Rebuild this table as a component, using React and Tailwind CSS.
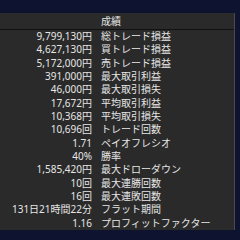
const rows = [
  ["9,799,130円", "総トレード損益"],
  ["4,627,130円", "買トレード損益"],
  ["5,172,000円", "売トレード損益"],
  ["391,000円", "最大取引利益"],
  ["46,000円", "最大取引損失"],
  ["17,672円", "平均取引利益"],
  ["10,368円", "平均取引損失"],
  ["10,696回", "トレード回数"],
  ["1.71", "ペイオフレシオ"],
  ["40%", "勝率"],
  ["1,585,420円", "最大ドローダウン"],
  ["10回", "最大連勝回数"],
  ["16回", "最大連敗回数"],
  ["131日21時間22分", "フラット期間"],
  ["1.16", "プロフィットファクター"],
];

export default function App() {
  return (
    <div
      className="w-[240px] h-[240px] bg-[#0e1430] pt-[13px] overflow-hidden"
      style={{ fontFamily: '"Noto Sans", "Noto Sans CJK JP", sans-serif' }}
    >
      <div className="w-[235px] h-[217px] bg-[#2a2a2a] border-r border-[#4a4a4a] text-[10px] text-[#e6e6e6] flex flex-col">
        <div className="h-[17px] shrink-0 border-b border-[#111] grid grid-cols-[101px_1fr] items-center leading-[13px]">
          <div />
          <div>成績</div>
        </div>
        <div className="flex-1 flex flex-col">
          {rows.map(([v, k]) => (
            <div key={k} className="flex-1 grid grid-cols-[92px_1fr] items-center leading-[13px]">
              <div className="text-right whitespace-nowrap">{v}</div>
              <div className="pl-[9px] whitespace-nowrap">{k}</div>
            </div>
          ))}
        </div>
      </div>
    </div>
  );
}
